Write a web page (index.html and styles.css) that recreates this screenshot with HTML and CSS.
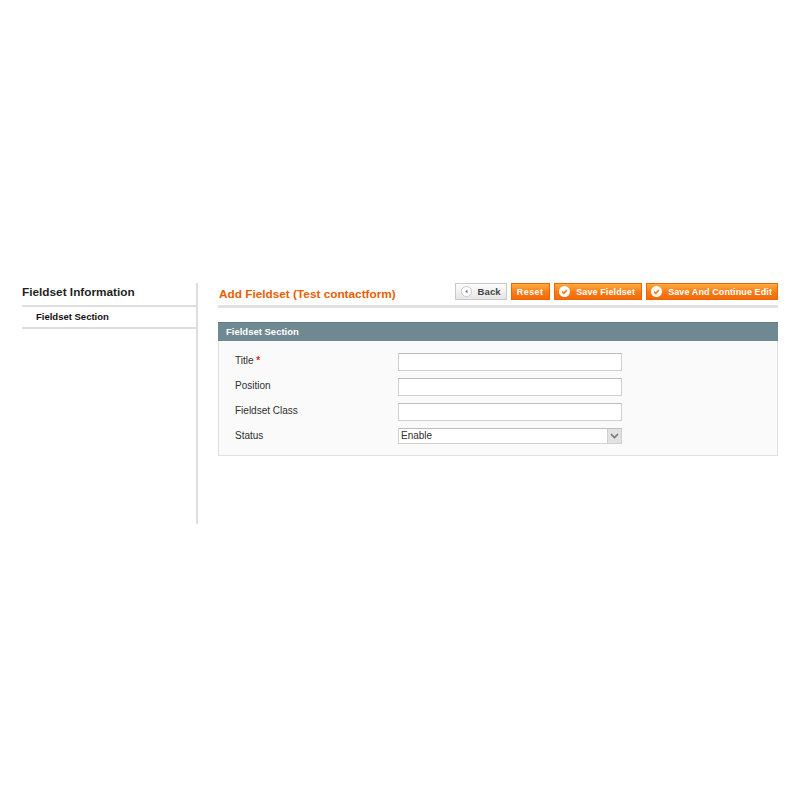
FILE: index.html
```html
<!DOCTYPE html>
<html lang="en">
  <head>
    <meta charset="UTF-8" />
    <title>Add Fieldset</title>
    <link rel="stylesheet" href="styles.css">
  </head>
  <body>
    <div class="page">
      <aside class="side">
        <h3 class="side_title">Fieldset Information</h3>
        <div class="side_item">Fieldset Section</div>
      </aside>

      <main class="main">
        <div class="main_head">
          <h3 class="main_title">Add Fieldset (Test contactform)</h3>
          <div class="buttons">
            <button class="btn btn_back">
              <svg class="btn_icon" viewBox="0 0 12 12">
                <circle cx="6" cy="6" r="5.5" fill="#fff" stroke="#c4c4c4" />
                <path d="M7 3.8 4.6 6 7 8.2z" fill="#777" />
              </svg>
              Back
            </button>
            <button class="btn btn_reset">Reset</button>
            <button class="btn btn_save">
              <svg class="btn_icon" viewBox="0 0 12 12">
                <circle cx="6" cy="6" r="6" fill="#fff" />
                <path d="M3.4 6.2 5.3 8 8.6 4.3" fill="none" stroke="#f77c16" stroke-width="1.7" />
              </svg>
              Save Fieldset
            </button>
            <button class="btn">
              <svg class="btn_icon" viewBox="0 0 12 12">
                <circle cx="6" cy="6" r="6" fill="#fff" />
                <path d="M3.4 6.2 5.3 8 8.6 4.3" fill="none" stroke="#f77c16" stroke-width="1.7" />
              </svg>
              Save And Continue Edit
            </button>
          </div>
        </div>

        <section class="panel">
          <h4 class="panel_head">Fieldset Section</h4>
          <div class="panel_body">
            <div class="row">
              <label class="row_label">Title <span class="required">*</span></label>
              <input class="field" type="text" />
            </div>
            <div class="row">
              <label class="row_label">Position</label>
              <input class="field" type="text" />
            </div>
            <div class="row">
              <label class="row_label">Fieldset Class</label>
              <input class="field" type="text" />
            </div>
            <div class="row">
              <label class="row_label">Status</label>
              <div class="field select">
                <span class="select_value">Enable</span>
                <span class="select_arrow">
                  <svg viewBox="0 0 9 6" width="9" height="6">
                    <path d="M1 1 4.5 4.5 8 1" fill="none" stroke="#777" stroke-width="1.6" />
                  </svg>
                </span>
              </div>
            </div>
          </div>
        </section>
      </main>
    </div>
  </body>
</html>
```

FILE: styles.css
```css
/* base */
*,
::before,
::after {
  box-sizing: border-box;
  margin: 0;
  padding: 0;
}
body {
  background-color: #fff;
  color: #2f2f2f;
  font-family: "Liberation Sans", Arial, sans-serif;
  font-size: 10px;
}

/* layout */
.page {
  display: flex;
  padding: 283px 22px 0;
}

/* sidebar */
.side {
  width: 176px;
  height: 241px;
  border-right: 2px solid #dedede;
}
.side_title {
  height: 24px;
  border-bottom: 2px solid #dedede;
  color: #1f1f1f;
  font-size: 11.8px;
  font-weight: bold;
  line-height: 18px;
}
.side_item {
  height: 22px;
  padding-left: 14px;
  border-bottom: 2px solid #dedede;
  color: #111;
  font-size: 9.5px;
  font-weight: bold;
  line-height: 20px;
}

/* main column */
.main {
  width: 560px;
  margin-left: 20px;
}
.main_head {
  display: flex;
  justify-content: space-between;
  height: 25px;
  padding-bottom: 4px;
  border-bottom: 3px solid #e2e2e2;
}
.main_title {
  margin-left: 1px;
  color: #eb5e00;
  font-size: 11.8px;
  font-weight: bold;
  line-height: 23px;
}
.buttons {
  display: flex;
  gap: 4px;
}
.btn {
  display: flex;
  align-items: center;
  justify-content: center;
  gap: 6px;
  height: 17px;
  padding: 0 5px 0 4px;
  border: 1px solid #ed6502;
  background: linear-gradient(#fdab3f, #f77c16 55%, #f2690a);
  color: #fff;
  font-family: inherit;
  font-size: 9px;
  font-weight: bold;
  letter-spacing: 0.1px;
}
.btn_icon {
  width: 11px;
  height: 11px;
}
.btn_save {
  width: 88px;
  padding-right: 6px;
}
.btn_reset {
  width: 39px;
  letter-spacing: 0.4px;
}
.btn_back {
  width: 52px;
  border-color: #c8c8c8;
  background: linear-gradient(#fcfcfc, #e6e6e6);
  color: #444;
  font-size: 9.5px;
}

/* panel */
.panel {
  margin-top: 14px;
}
.panel_head {
  height: 19px;
  padding-left: 8px;
  border-top: 1px solid #5f7a80;
  background-color: #6f8992;
  color: #fff;
  font-size: 9.5px;
  font-weight: bold;
  line-height: 17px;
}
.panel_body {
  display: flex;
  flex-direction: column;
  gap: 7px;
  height: 115px;
  padding-top: 12px;
  border: 1px solid #e0e0e0;
  border-top: 0;
  background-color: #fafafa;
}
.row {
  display: flex;
  align-items: center;
  height: 18px;
}
.row_label {
  width: 179px;
  padding-left: 16px;
  padding-bottom: 3px;
  font-size: 10px;
}
.required {
  color: #e02b27;
  font-weight: bold;
}
.field {
  width: 224px;
  height: 18px;
  border: 1px solid #d0d0d0;
  border-top-color: #bdbdbd;
  background-color: #fff;
}
.select {
  display: flex;
  align-items: center;
  align-self: flex-start;
  justify-content: space-between;
  height: 16px;
  color: #2f2f2f;
}
.select_value {
  padding-left: 2px;
  padding-bottom: 1px;
  font-size: 10px;
}
.select_arrow {
  display: flex;
  align-items: center;
  justify-content: center;
  width: 14px;
  height: 100%;
  border-left: 1px solid #d0d0d0;
  background-color: #e2e2e2;
}
```
